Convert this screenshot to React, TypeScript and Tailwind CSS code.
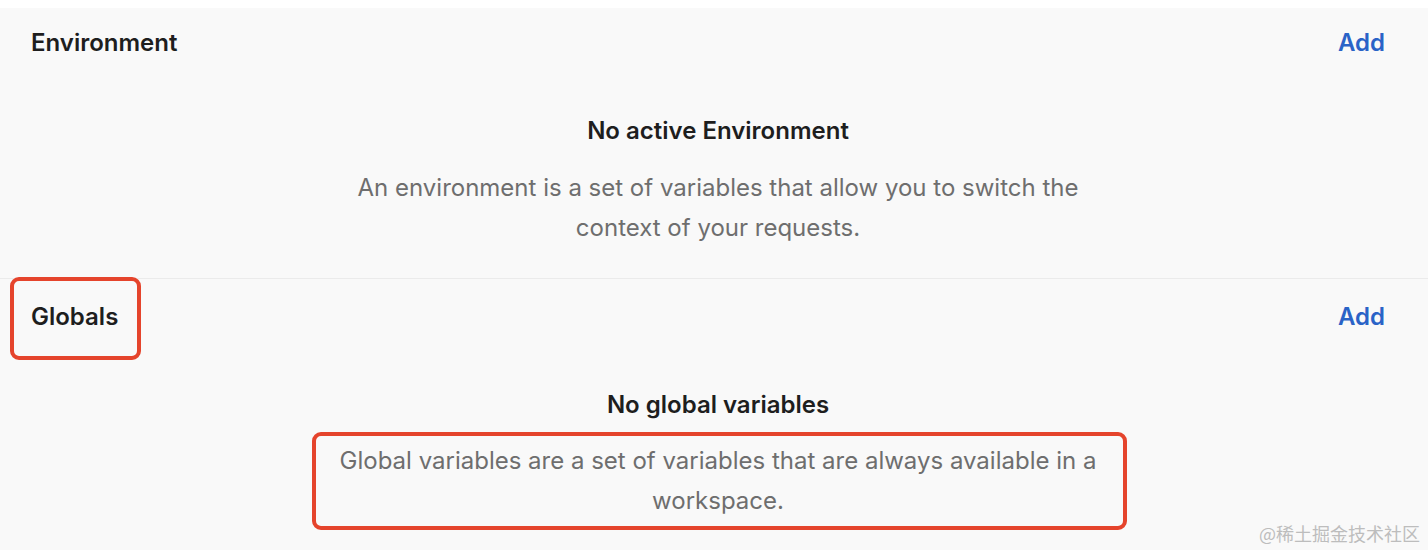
import React from "react";

function Section({
  title,
  emptyTitle,
  body,
  headerClass,
  titleGap,
  bodyGap,
  bottomPad,
}: {
  title: string;
  emptyTitle: string;
  body: string;
  headerClass: string;
  titleGap: string;
  bodyGap: string;
  bottomPad: string;
}) {
  return (
    <section className={bottomPad}>
      <div className={`flex items-center justify-between pl-[31px] pr-[43px] ${headerClass}`}>
        <h2 className="text-[24px] font-semibold text-[#1e1e1e] leading-[28px]">{title}</h2>
        <button className="text-[24px] font-semibold text-[#2a63c7] leading-[28px]">Add</button>
      </div>
      <div className={`flex flex-col items-center pl-[8px] ${titleGap}`}>
        <h3 className="text-[24px] font-semibold text-[#1e1e1e] leading-[28px]">{emptyTitle}</h3>
        <p className={`${bodyGap} w-[785px] text-center text-[24px] leading-[40px] text-[#6e6e6e]`}>{body}</p>
      </div>
    </section>
  );
}

export default function App() {
  return (
    <div
      className="relative h-[550px] w-[1428px] overflow-hidden bg-white"
      style={{ fontFamily: "Inter, 'Noto Sans', sans-serif" }}
    >
      <div className="mt-[8px] h-[542px] bg-[#f9f9f9]">
        <Section
          title="Environment"
          emptyTitle="No active Environment"
          body="An environment is a set of variables that allow you to switch the context of your requests."
          headerClass="h-[68px]"
          titleGap="mt-[40px]"
          bodyGap="mt-[23px]"
          bottomPad="pt-[1px] pb-[30px] border-b border-[#ebebeb]"
        />
        <Section
          title="Globals"
          emptyTitle="No global variables"
          body="Global variables are a set of variables that are always available in a workspace."
          headerClass="h-[76px]"
          titleGap="mt-[36px]"
          bodyGap="mt-[22px]"
          bottomPad=""
        />
      </div>

      {/* annotation boxes */}
      <div className="absolute left-[10px] top-[277px] h-[83px] w-[131px] rounded-[9px] border-[4px] border-[#e5442c]" />
      <div className="absolute left-[312px] top-[432px] h-[98px] w-[815px] rounded-[9px] border-[4px] border-[#e5442c]" />

      {/* watermark */}
      <div
        className="absolute right-[8px] top-[521px] text-[18px] leading-[24px] text-[#bdbdbd]"
        style={{ fontFamily: "'Noto Sans CJK SC', 'Noto Sans', sans-serif" }}
      >
        @稀土掘金技术社区
      </div>
    </div>
  );
}
